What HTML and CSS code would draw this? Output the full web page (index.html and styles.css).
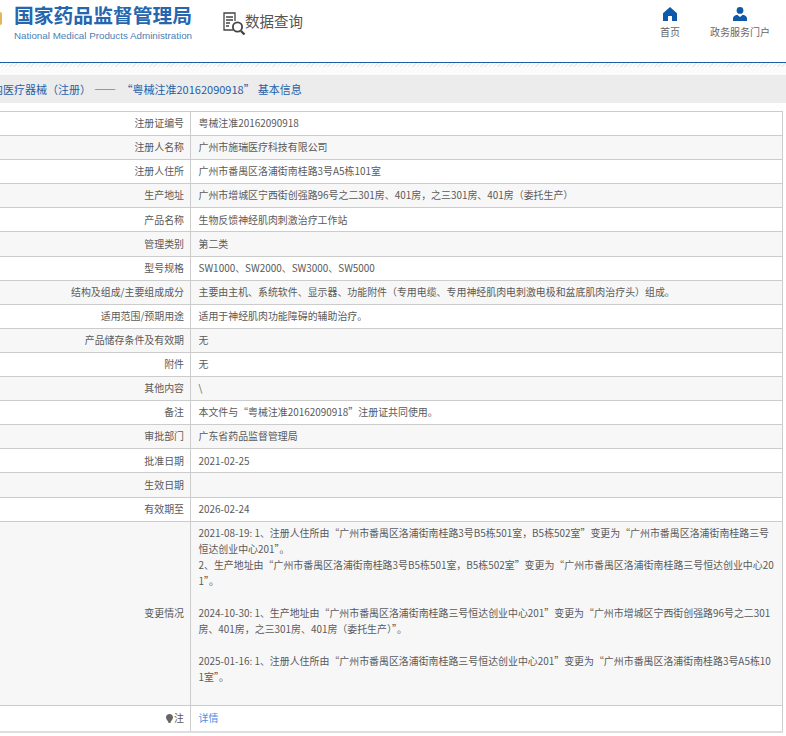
FILE: index.html
```html
<!DOCTYPE html>
<html lang="zh-CN">
  <head>
    <meta charset="UTF-8" />
    <title>数据查询</title>
    <link rel="stylesheet" href="styles.css">
  </head>
  <body>
    <div class="header">
      <div class="logo-edge"></div>
      <div class="logo">
        <div class="logo-cn">国家药品监督管理局</div>
        <div class="logo-en">National Medical Products Administration</div>
      </div>
      <div class="query">
        <svg class="query-icon" width="23" height="24" viewBox="0 0 23 24" fill="none" stroke="#444" stroke-width="1.3">
          <path d="M10 18H1V1h11v8" />
          <path d="M3 5h7M3 8h7M3 11h4M3 14h3" />
          <circle cx="14.5" cy="15" r="4.6" stroke-width="1.8" />
          <path d="M18 19l3.5 3.5" stroke-width="2.4" />
        </svg>
        <span>数据查询</span>
      </div>
      <div class="nav">
        <div class="nav-item nav-home">
          <svg width="14" height="14" viewBox="0 0 14 14" fill="#0f5aa8">
            <path d="M7 0L14 6.2V14H9V9H5V14H0V6.2Z" />
          </svg>
          <span>首页</span>
        </div>
        <div class="nav-item nav-portal">
          <svg width="14" height="14" viewBox="0 0 14 14" fill="#0f5aa8">
            <circle cx="7" cy="3.4" r="3.4" />
            <path d="M0 14V11.5C0 9.5 2 8.2 4.2 7.8L7 10L9.8 7.8C12 8.2 14 9.5 14 11.5V14Z" />
          </svg>
          <span>政务服务门户</span>
        </div>
      </div>
    </div>
    <div class="strip"></div>
    <div class="title">境内医疗器械（注册）<span class="dash">——</span><span class="reg">“粤械注准20162090918”</span>基本信息</div>
    <table class="info">
      <tr><td class="name">注册证编号</td><td>粤械注准20162090918</td></tr>
      <tr><td class="name">注册人名称</td><td>广州市施瑞医疗科技有限公司</td></tr>
      <tr><td class="name">注册人住所</td><td>广州市番禺区洛浦街南桂路3号A5栋101室</td></tr>
      <tr><td class="name">生产地址</td><td>广州市增城区宁西街创强路96号之二301房、401房，之三301房、401房（委托生产）</td></tr>
      <tr><td class="name">产品名称</td><td>生物反馈神经肌肉刺激治疗工作站</td></tr>
      <tr><td class="name">管理类别</td><td>第二类</td></tr>
      <tr><td class="name">型号规格</td><td>SW1000、SW2000、SW3000、SW5000</td></tr>
      <tr><td class="name">结构及组成/主要组成成分</td><td>主要由主机、系统软件、显示器、功能附件（专用电缆、专用神经肌肉电刺激电极和盆底肌肉治疗头）组成。</td></tr>
      <tr><td class="name">适用范围/预期用途</td><td>适用于神经肌肉功能障碍的辅助治疗。</td></tr>
      <tr><td class="name">产品储存条件及有效期</td><td>无</td></tr>
      <tr><td class="name">附件</td><td>无</td></tr>
      <tr><td class="name">其他内容</td><td>\</td></tr>
      <tr><td class="name">备注</td><td>本文件与“粤械注准20162090918”注册证共同使用。</td></tr>
      <tr><td class="name">审批部门</td><td>广东省药品监督管理局</td></tr>
      <tr><td class="name">批准日期</td><td>2021-02-25</td></tr>
      <tr><td class="name">生效日期</td><td></td></tr>
      <tr><td class="name">有效期至</td><td>2026-02-24</td></tr>
      <tr>
        <td class="name">变更情况</td>
        <td class="changes">2021-08-19: 1、注册人住所由“广州市番禺区洛浦街南桂路3号B5栋501室，B5栋502室”变更为“广州市番禺区洛浦街南桂路三号恒达创业中心201”。<br>2、生产地址由“广州市番禺区洛浦街南桂路3号B5栋501室，B5栋502室”变更为“广州市番禺区洛浦街南桂路三号恒达创业中心201”。<br><br>2024-10-30: 1、生产地址由“广州市番禺区洛浦街南桂路三号恒达创业中心201”变更为“广州市增城区宁西街创强路96号之二301房、401房，之三301房、401房（委托生产）”。<br><br>2025-01-16: 1、注册人住所由“广州市番禺区洛浦街南桂路三号恒达创业中心201”变更为“广州市番禺区洛浦街南桂路3号A5栋101室”。<br><br></td>
      </tr>
      <tr class="last-row">
        <td class="name">
          <svg class="bulb" width="7" height="9" viewBox="0 0 7 9" fill="#666">
            <path d="M3.5 0C1.5 0 0 1.5 0 3.4C0 5 1.2 6 2 7.2L2.6 9H4.4L5 7.2C5.8 6 7 5 7 3.4C7 1.5 5.5 0 3.5 0Z" />
          </svg>注
        </td>
        <td><a class="detail" href="#">详情</a></td>
      </tr>
    </table>
  </body>
</html>
```
FILE: styles.css
```css
html,
body {
  margin: 0;
  padding: 0;
  height: 736px;
  overflow: hidden;
  background-color: #fff;
  font-family: "Noto Sans CJK SC", "Liberation Sans", sans-serif;
  color: #5a5a5a;
}

.header {
  display: flex;
  height: 62px;
  border-bottom: 1px solid #1c5fa5;
  position: relative;
}

.logo-edge {
  position: absolute;
  left: 0;
  top: 12px;
  width: 2px;
  height: 13px;
  border-radius: 0 2px 2px 0;
  background-color: #e3b65a;
}

.logo {
  margin-left: 14px;
  padding-top: 3px;
  width: 190px;
}

.logo-cn {
  font-size: 19.8px;
  line-height: 23px;
  font-weight: bold;
  color: #2566ae;
  white-space: nowrap;
}

.logo-en {
  font-family: "Liberation Sans", sans-serif;
  font-size: 9.8px;
  line-height: 13px;
  margin-top: 2.5px;
  color: #4a7fb5;
  white-space: nowrap;
}

.query {
  display: flex;
  align-items: flex-start;
  margin-left: 19px;
  padding-top: 12px;
  color: #555;
  font-size: 14.5px;
  line-height: 20px;
}

.query span {
  margin-top: -1px;
}

.query-icon {
  display: block;
  margin-right: -1px;
}

.nav {
  position: absolute;
  top: 7px;
  left: 0;
  width: 786px;
}

.nav-item {
  position: absolute;
  top: 0;
  display: flex;
  flex-direction: column;
  align-items: center;
  width: 80px;
  font-size: 10px;
  line-height: 14px;
  color: #666;
}

.nav-item span {
  margin-top: 4px;
}

.nav-home {
  left: 630px;
}

.nav-portal {
  left: 700px;
}

.strip {
  height: 12px;
  background-color: #fbfbfb;
  background-image: repeating-linear-gradient(135deg, #ebebeb 0, #ebebeb 1px, #fbfbfb 1px, #fbfbfb 3px);
  background-size: 100% 4px;
  background-repeat: no-repeat;
}

.title {
  height: 28px;
  line-height: 28px;
  background-color: #ececec;
  color: #1f5fa8;
  font-size: 11px;
  margin-left: -19px;
  white-space: nowrap;
}

.dash {
  margin: 0 5px 0 3px;
  letter-spacing: 0.5px;
}

.reg {
  margin-right: 3px;
}

.info {
  margin: 8px 0 0 -20px;
  width: 803px;
  table-layout: fixed;
  border-collapse: collapse;
  font-size: 9.93px;
  line-height: 16px;
  border-bottom: 2px solid #ddd;
}

.info tr:nth-child(even) {
  background-color: #f7f7f7;
}

.info td {
  border: 1px solid #ccc;
  padding: 3.2px 8px 3.92px 8px;
  height: 16px;
  word-break: break-all;
  vertical-align: middle;
}

.info td.name {
  width: 195px;
  padding-left: 8px;
  padding-right: 5.5px;
  text-align: right;
}

.last-row td {
  height: 18px;
}

.bulb {
  margin-right: 1px;
  vertical-align: -1px;
}

.detail {
  color: #4a90e2;
  text-decoration: none;
}
```
